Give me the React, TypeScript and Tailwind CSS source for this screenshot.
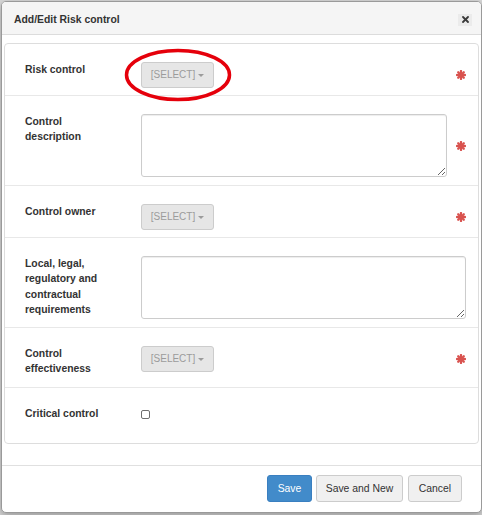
import React from "react";

function Asterisk() {
  return (
    <svg width="10" height="10" viewBox="0 0 10 10" className="block">
      <g stroke="#d9534f" strokeWidth="2.3" strokeLinecap="round">
        <line x1="5" y1="1" x2="5" y2="9" />
        <line x1="1" y1="5" x2="9" y2="5" />
        <line x1="2.2" y1="2.2" x2="7.8" y2="7.8" />
        <line x1="7.8" y1="2.2" x2="2.2" y2="7.8" />
      </g>
    </svg>
  );
}

function SelectBtn() {
  return (
    <div className="w-[73px] h-[26px] bg-[#e6e6e6] border border-[#cccccc] rounded-[3px] text-[#9b9b9b] text-[10px] flex items-center justify-center gap-[3px] leading-none">
      <span>[SELECT]</span>
      <span className="w-0 h-0 border-l-[3px] border-r-[3px] border-t-[3px] border-l-transparent border-r-transparent border-t-[#9b9b9b] mt-[1px]" />
    </div>
  );
}

function Row({
  label,
  height,
  last,
  star,
  children,
}: {
  label: React.ReactNode;
  height: string;
  last?: boolean;
  star?: boolean;
  children: React.ReactNode;
}) {
  return (
    <div className={`flex items-start pt-[18px] ${height} ${last ? "" : "border-b border-[#e8e8e8]"}`}>
      <div className="w-[136px] pl-[20px] pr-[26px] text-[10.4px] leading-[15.4px] font-bold text-[#333333]">
        {label}
      </div>
      <div className="flex-1 flex items-center justify-between pr-[12px] min-h-[15px]">
        {children}
        {star ? <Asterisk /> : <span />}
      </div>
    </div>
  );
}

export default function App() {
  return (
    <div className="relative w-[482px] h-[515px] bg-[#d8d8d8] pt-[1px] pl-[1px] font-['Liberation_Sans',Arial,sans-serif] overflow-hidden">
      <div className="w-[481px] h-[512px] bg-white border border-[#9a9a9a] rounded-[5px] flex flex-col overflow-hidden shadow-[0_3px_9px_rgba(0,0,0,0.3)]">
        {/* header */}
        <div className="h-[33px] shrink-0 bg-[#f5f5f5] border-b border-[#dcdcdc] flex items-center justify-between pl-[12px] pr-[9px] pt-[3px]">
          <span className="text-[10.4px] font-bold text-[#333333]">Add/Edit Risk control</span>
          <div className="w-[14px] h-[12px] bg-[#ebebeb] flex items-center justify-center">
            <svg width="7" height="7" viewBox="0 0 7 7">
              <g stroke="#3a3a3a" strokeWidth="1.8" strokeLinecap="round">
                <line x1="1" y1="1" x2="6" y2="6" />
                <line x1="6" y1="1" x2="1" y2="6" />
              </g>
            </svg>
          </div>
        </div>
        {/* body */}
        <div className="px-[2px] pt-[8px] pb-[21px] shrink-0">
          <div className="border border-[#dddddd] rounded-[4px] flex flex-col">
            <Row label="Risk control" height="h-[52px]" star>
              <SelectBtn />
            </Row>
            <Row label="Control description" height="h-[90px]" star>
              <textarea className="w-[306px] h-[63px] border border-[#cccccc] rounded-[3px] bg-white shadow-[inset_0_1px_1px_rgba(0,0,0,0.075)] block" />
            </Row>
            <Row label="Control owner" height="h-[52px]" star>
              <SelectBtn />
            </Row>
            <Row label="Local, legal, regulatory and contractual requirements" height="h-[90px]">
              <textarea className="w-[325px] h-[63px] border border-[#cccccc] rounded-[3px] bg-white shadow-[inset_0_1px_1px_rgba(0,0,0,0.075)] block" />
            </Row>
            <Row label="Control effectiveness" height="h-[60px]" star>
              <SelectBtn />
            </Row>
            <Row label="Critical control" height="h-[55px]" last>
              <input
                type="checkbox"
                className="appearance-none w-[9px] h-[9px] border border-[#6f6f6f] rounded-[2px] bg-white block mt-[2px]"
              />
            </Row>
          </div>
        </div>
        {/* footer */}
        <div className="h-[47px] shrink-0 border-t border-[#e0e0e0] flex items-start justify-end pr-[19px] pt-[9px]">
          <button className="w-[45px] h-[27px] rounded-[3px] bg-[#428bca] border border-[#3a7fc0] text-white text-[10.4px]">
            Save
          </button>
          <button className="ml-[4px] w-[87px] h-[27px] rounded-[3px] bg-[#f0f0f0] border border-[#cccccc] text-[#333333] text-[10.4px]">
            Save and New
          </button>
          <button className="ml-[5px] w-[54px] h-[27px] rounded-[3px] bg-[#f0f0f0] border border-[#cccccc] text-[#333333] text-[10.4px]">
            Cancel
          </button>
        </div>
      </div>
      {/* red annotation ellipse */}
      <svg className="absolute left-[124px] top-[48px]" width="108" height="54" viewBox="0 0 108 54">
        <ellipse cx="54" cy="27" rx="51.5" ry="24.5" fill="none" stroke="#e5000b" strokeWidth="3.5" />
      </svg>
    </div>
  );
}
